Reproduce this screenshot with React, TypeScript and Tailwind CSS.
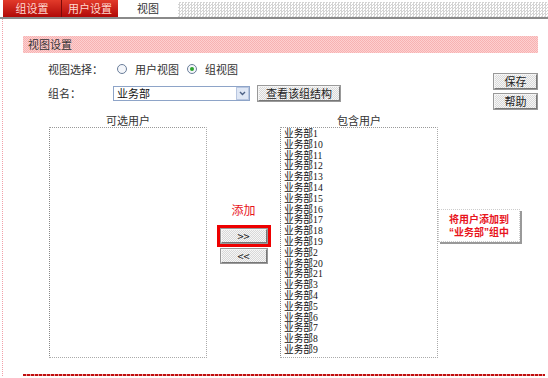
import React from "react";

const font = { fontFamily: '"Noto Sans CJK SC", "Liberation Sans", sans-serif' };

const items = ["1","10","11","12","13","14","15","16","17","18","19","2","20","21","3","4","5","6","7","8","9"].map((n) => "业务部" + n);

function Btn({ children, className = "" }: { children: React.ReactNode; className?: string }) {
  return (
    <div
      className={
        "flex items-center justify-center border border-t-[#f4f4f4] border-l-[#f4f4f4] border-r-[#777] border-b-[#777] outline outline-1 outline-[#999] bg-[repeating-conic-gradient(#d8d8d8_0_25%,#f6f6f6_0_50%)] bg-[length:2px_2px] text-[11px] text-[#222] " +
        className
      }
    >
      {children}
    </div>
  );
}

function Radio({ checked }: { checked?: boolean }) {
  return (
    <span className="w-[10px] h-[10px] rounded-full border border-[#6a7e9a] bg-[#f4f6fa] flex items-center justify-center">
      {checked && <span className="w-[4px] h-[4px] rounded-full bg-[#2da32d]" />}
    </span>
  );
}

export default function App() {
  return (
    <div className="w-[548px] h-[378px] bg-white overflow-hidden text-[#333]" style={font}>
      {/* tab bar */}
      <div className="flex h-[19px] pl-[3px] border-b-2 border-[#8a8a8a] items-end">
        <div className="w-[59px] h-[17px] bg-[linear-gradient(#e23a2a,#b00a08)] text-[#ffd8d0] text-[11px] flex items-center justify-center border-r border-[#7a0a08]">组设置</div>
        <div className="w-[56px] h-[17px] bg-[linear-gradient(#e23a2a,#b00a08)] text-[#ffd8d0] text-[11px] flex items-center justify-center">用户设置</div>
        <div className="w-[60px] h-[17px] bg-white text-[11px] text-[#333] flex items-center justify-center">视图</div>
        <div className="flex-1 h-[15px] bg-[repeating-conic-gradient(#d4d4d4_0_25%,#ffffff_0_50%)] bg-[length:3px_3px]" />
      </div>

      {/* body */}
      <div className="ml-[2px] h-[357px] border-l border-dotted border-[#f2a0a8] pl-[20px] pt-[17px] flex flex-col">
        <div className="w-[515px] h-[17px] bg-[repeating-conic-gradient(#f7b2b2_0_25%,#fdd0d0_0_50%)] bg-[length:2px_2px] text-[11px] text-[#333] flex items-center pl-[5px]">
          视图设置
        </div>

        <div className="flex">
          <div className="flex flex-col pl-[25px]">
            <div className="flex items-center h-[16px] mt-[8px] text-[11px]">
              <span className="w-[69px]">视图选择：</span>
              <Radio />
              <span className="ml-[8px] mr-[8px]">用户视图</span>
              <Radio checked />
              <span className="ml-[8px]">组视图</span>
            </div>
            <div className="flex items-center h-[16px] mt-[8px] text-[11px]">
              <span className="w-[65px]">组名：</span>
              <div className="w-[137px] h-[15px] border border-[#8ea4c8] bg-white flex items-center justify-between">
                <span className="pl-[3px] text-[11px] text-[#111]">业务部</span>
                <span className="w-[13px] h-[13px] bg-[#dfe7f5] border border-[#b8c6e0] flex items-center justify-center">
                  <svg width="7" height="5" viewBox="0 0 7 5"><path d="M1 1 L3.5 3.5 L6 1" stroke="#4d6185" strokeWidth="1.4" fill="none" /></svg>
                </span>
              </div>
              <Btn className="ml-[8px] w-[82px] h-[15px]">查看该组结构</Btn>
            </div>
          </div>
          <div className="ml-auto mr-[11px] mt-[21px] flex flex-col gap-[5px]">
            <Btn className="w-[43px] h-[15px]">保存</Btn>
            <Btn className="w-[43px] h-[15px]">帮助</Btn>
          </div>
        </div>

        <div className="flex pl-[26px] mt-[4px]">
          <div className="flex flex-col w-[158px]">
            <div className="text-center text-[11px] h-[14px] leading-[14px]">可选用户</div>
            <div className="h-[231px] border border-dotted border-[#aaa] border-l-[#888] border-t-[#999]" />
          </div>
          <div className="w-[73px] flex flex-col items-center pt-[90px]">
            <div className="text-[12px] text-[#e8141c] leading-[14px] mb-[8px]" style={{ fontFamily: '"Noto Sans CJK SC", serif' }}>添加</div>
            <div className="border-[3px] border-[#e00] p-[1px]">
              <Btn className="w-[46px] h-[14px] text-[10px]">&gt;&gt;</Btn>
            </div>
            <Btn className="mt-[2px] w-[46px] h-[14px] text-[10px]">&lt;&lt;</Btn>
          </div>
          <div className="flex flex-col w-[158px]">
            <div className="text-center text-[11px] h-[14px] leading-[14px]">包含用户</div>
            <div className="h-[231px] border border-dotted border-[#aaa] border-l-[#888] border-t-[#999] pl-[3px] pt-[1px]">
              {items.map((t) => (
                <div key={t} className="text-[9.7px] leading-[10.8px] h-[10.8px] text-[#111]" style={{ fontFamily: '"Liberation Serif", "Noto Sans CJK SC", serif' }}>
                  {t}
                </div>
              ))}
            </div>
          </div>
          <div
            className="mt-[96px] self-start w-[82px] h-[33px] border border-dotted border-[#ccc] shadow-[2px_2px_0_#999] flex flex-col items-center justify-center text-[10px] font-bold text-[#e8141c] leading-[13px]"
            style={{ fontFamily: '"Liberation Sans", "Noto Sans CJK SC", sans-serif' }}
          >
            <span>将用户添加到</span>
            <span>“业务部”组中</span>
          </div>
        </div>

        <div className="mt-auto w-[522px] h-[2px] bg-[repeating-linear-gradient(90deg,#c01010_0_3px,#f0a0a0_3px_4px)]" />
      </div>
    </div>
  );
}
